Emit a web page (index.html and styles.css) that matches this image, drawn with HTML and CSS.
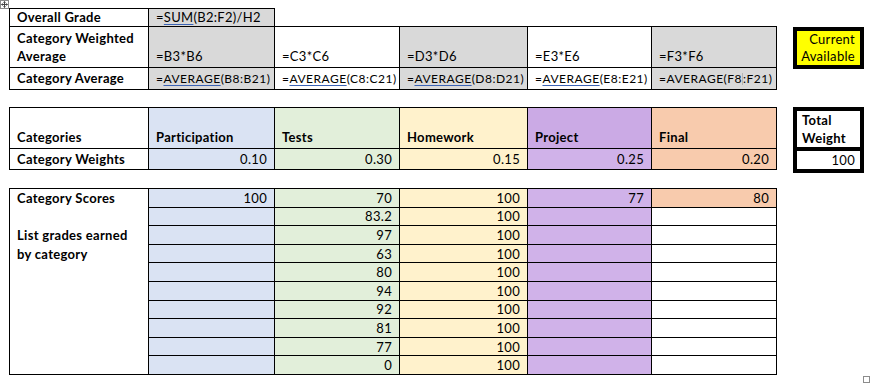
FILE: index.html
```html
<!DOCTYPE html>
<html lang="en">
<head>
<meta charset="utf-8">
<title>Grade Calculator</title>
<link rel="stylesheet" href="styles.css">
</head>
<body>
<div class="page">
  <svg class="move-handle" width="9" height="9" viewBox="0 0 9 9" aria-hidden="true">
    <rect x="0.5" y="0.5" width="8" height="8" fill="#fff" stroke="#8a8a8a"/>
    <path d="M4.5 1.5v6M1.5 4.5h6" stroke="#444" stroke-width="1"/>
    <path d="M3.3 2.6L4.5 1.5L5.7 2.6M3.3 6.4L4.5 7.5L5.7 6.4M2.6 3.3L1.5 4.5L2.6 5.7M6.4 3.3L7.5 4.5L6.4 5.7" fill="none" stroke="#444" stroke-width="0.8"/>
  </svg>

  <div class="band band-top">
    <table class="grid">
      <colgroup>
        <col class="c-a"><col class="c-b"><col class="c-c"><col class="c-d"><col class="c-e"><col class="c-f">
      </colgroup>
      <tr class="r17">
        <td class="b">Overall Grade</td>
        <td class="gray">=<span class="fn">SUM</span>(B2:F2)/H2</td>
        <td class="blank" colspan="4"></td>
      </tr>
      <tr class="r41">
        <td class="b bottom">Category Weighted Average</td>
        <td class="gray bottom">=B3*B6</td>
        <td class="bottom">=C3*C6</td>
        <td class="gray bottom">=D3*D6</td>
        <td class="bottom">=E3*E6</td>
        <td class="gray bottom">=F3*F6</td>
      </tr>
      <tr class="r22">
        <td class="b">Category Average</td>
        <td class="gray small">=<span class="fn">AVERAGE</span>(B8:B21)</td>
        <td class="small">=<span class="fn">AVERAGE</span>(C8:C21)</td>
        <td class="gray small">=<span class="fn">AVERAGE</span>(D8:D21)</td>
        <td class="small">=<span class="fn">AVERAGE</span>(E8:E21)</td>
        <td class="gray small">=AVERAGE(F8<span class="caret"></span>:F21)</td>
      </tr>
    </table>
    <div class="current">Current<br>Available</div>
  </div>

  <div class="band band-mid">
    <table class="grid">
      <colgroup>
        <col class="c-a"><col class="c-b"><col class="c-c"><col class="c-d"><col class="c-e"><col class="c-f">
      </colgroup>
      <tr class="r41">
        <td class="b bottom">Categories</td>
        <td class="b bottom blue">Participation</td>
        <td class="b bottom green">Tests</td>
        <td class="b bottom yellow">Homework</td>
        <td class="b bottom purple-h">Project</td>
        <td class="b bottom peach">Final</td>
      </tr>
      <tr class="r21">
        <td class="b">Category Weights</td>
        <td class="num blue">0.10</td>
        <td class="num green">0.30</td>
        <td class="num yellow">0.15</td>
        <td class="num purple">0.25</td>
        <td class="num peach">0.20</td>
      </tr>
    </table>
    <div class="total">
      <div class="total-head">Total<br>Weight</div>
      <div class="total-val">100</div>
    </div>
  </div>

  <table class="grid scores">
    <colgroup>
      <col class="c-a"><col class="c-b"><col class="c-c"><col class="c-d"><col class="c-e"><col class="c-f">
    </colgroup>
    <tr>
      <td class="b label" rowspan="10">Category Scores<br><br>List grades earned<br>by category</td>
      <td class="num blue">100</td>
      <td class="num green">70</td>
      <td class="num yellow">100</td>
      <td class="num purple">77</td>
      <td class="num peach">80</td>
    </tr>
    <tr><td class="blue"></td><td class="num green">83.2</td><td class="num yellow">100</td><td class="purple"></td><td></td></tr>
    <tr><td class="blue"></td><td class="num green">97</td><td class="num yellow">100</td><td class="purple"></td><td></td></tr>
    <tr><td class="blue"></td><td class="num green">63</td><td class="num yellow">100</td><td class="purple"></td><td></td></tr>
    <tr><td class="blue"></td><td class="num green">80</td><td class="num yellow">100</td><td class="purple"></td><td></td></tr>
    <tr><td class="blue"></td><td class="num green">94</td><td class="num yellow">100</td><td class="purple"></td><td></td></tr>
    <tr><td class="blue"></td><td class="num green">92</td><td class="num yellow">100</td><td class="purple"></td><td></td></tr>
    <tr><td class="blue"></td><td class="num green">81</td><td class="num yellow">100</td><td class="purple"></td><td></td></tr>
    <tr><td class="blue"></td><td class="num green">77</td><td class="num yellow">100</td><td class="purple"></td><td></td></tr>
    <tr><td class="blue"></td><td class="num green">0</td><td class="num yellow">100</td><td class="purple"></td><td></td></tr>
  </table>

  <span class="resize-handle"></span>
</div>
</body>
</html>
```
FILE: styles.css
```css
* { box-sizing: border-box; }

html, body {
  margin: 0;
  padding: 0;
  background: #ffffff;
}

body {
  font-family: Lato, "Liberation Sans", Arial, sans-serif;
  font-size: 13px;
  letter-spacing: 0.3px;
  color: #000;
  width: 871px;
  height: 384px;
  overflow: hidden;
}

.page {
  position: relative;
  width: 871px;
  height: 384px;
  padding: 8px 0 0 9px;
}

.move-handle {
  position: absolute;
  left: 0;
  top: 0;
}

.resize-handle {
  position: absolute;
  left: 863px;
  top: 376px;
  width: 7px;
  height: 7px;
  border: 1px solid #8c8c8c;
  background: #fff;
}

.band {
  display: flex;
  align-items: flex-start;
  gap: 16px;
}

.band-top { margin-bottom: 17px; }
.band-mid { margin-bottom: 15px; }

.grid {
  border-collapse: collapse;
  table-layout: fixed;
  width: 767px;
}

.c-a { width: 139px; }
.c-b { width: 126px; }
.c-c { width: 125px; }
.c-d { width: 128px; }
.c-e { width: 124px; }
.c-f { width: 125px; }

.grid td {
  border: 1px solid #000;
  padding: 0 7px;
  line-height: 17px;
  vertical-align: middle;
  white-space: nowrap;
  overflow: hidden;
}

.grid td.blank {
  border-top: none;
  border-right: none;
}

.r17 td { height: 17px; }
.r41 td { height: 41px; }
.r22 td { height: 22px; }
.r21 td { height: 21px; }

.grid td.bottom {
  vertical-align: bottom;
  padding-bottom: 2px;
  white-space: normal;
  line-height: 18px;
}

.b { font-weight: 700; }

.grid td.small {
  font-size: 12px;
  letter-spacing: 0.5px;
}

.num { text-align: right; }

.fn {
  text-decoration: underline;
  text-decoration-color: #3b63b5;
  text-underline-offset: 2px;
}

.caret {
  display: inline-block;
  width: 1px;
  height: 12px;
  background: #b5b5b5;
  vertical-align: -2px;
}

.gray { background: #d9d9d9; }
.blue { background: #dae3f3; }
.green { background: #e2efda; }
.yellow { background: #fff2cc; }
.purple { background: #d0b2e9; }
.purple-h { background: #cbaae5; }
.peach { background: #f8cbad; }

.current {
  margin-top: 19px;
  width: 71px;
  height: 42px;
  border: 4px solid #000;
  background: #ffff00;
  text-align: right;
  padding: 0 5px 0 0;
  line-height: 17px;
}

.total {
  width: 71px;
  border: 4px solid #000;
  display: flex;
  flex-direction: column;
}

.total-head {
  height: 40px;
  font-weight: 700;
  line-height: 18px;
  padding: 0 0 0 5px;
  border-bottom: 4px solid #000;
}

.total-val {
  height: 18px;
  line-height: 18px;
  text-align: right;
  padding-right: 5px;
}

.scores tr { height: 18.6px; }
.scores td {
  height: 18.6px;
  line-height: 16px;
}

.scores td.label {
  vertical-align: top;
  background: #fff;
  line-height: 18.6px;
}
```
